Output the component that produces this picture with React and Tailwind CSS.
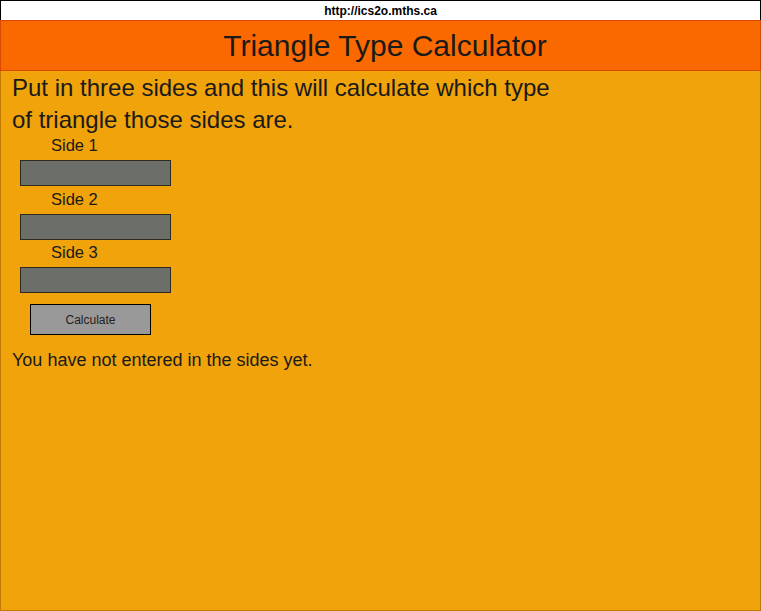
export default function App() {
  return (
    <div className="flex flex-col w-[761px] h-[611px] font-['Liberation_Sans',Arial,sans-serif] text-[#1a1a1a]">
      <div className="flex justify-center items-center h-[20px] bg-white border border-b-0 border-black text-[12px] font-bold text-black">
        http://ics2o.mths.ca
      </div>
      <div className="flex justify-center items-center h-[51px] pl-[9px] bg-[#fa6900] border border-[#d84a00] text-[30px]">
        Triangle Type Calculator
      </div>
      <div className="flex flex-col flex-1 bg-[#f0a30a] border border-t-0 border-[#c27a00] px-[11px]">
        <p className="w-[558px] text-[24px] leading-[32px] mt-[1px]">
          Put in three sides and this will calculate which type of triangle
          those sides are.
        </p>
        <div className="flex flex-col pl-[8px]">
          <label className="pl-[31px] text-[16.5px] leading-[18px]">Side 1</label>
          <input className="w-[151px] h-[26px] mt-[6px] bg-[#6c6f69] border border-[#2e2a1e]" />
          <label className="pl-[31px] mt-[4px] text-[16.5px] leading-[18px]">Side 2</label>
          <input className="w-[151px] h-[26px] mt-[6px] bg-[#6c6f69] border border-[#2e2a1e]" />
          <label className="pl-[31px] mt-[3px] text-[16.5px] leading-[18px]">Side 3</label>
          <input className="w-[151px] h-[26px] mt-[6px] bg-[#6c6f69] border border-[#2e2a1e]" />
          <button className="ml-[10px] mt-[11px] w-[121px] h-[31px] bg-[#999999] border border-black text-[12px] text-[#222]">
            Calculate
          </button>
        </div>
        <p className="mt-[14px] text-[18px] leading-[22px]">
          You have not entered in the sides yet.
        </p>
      </div>
    </div>
  );
}
